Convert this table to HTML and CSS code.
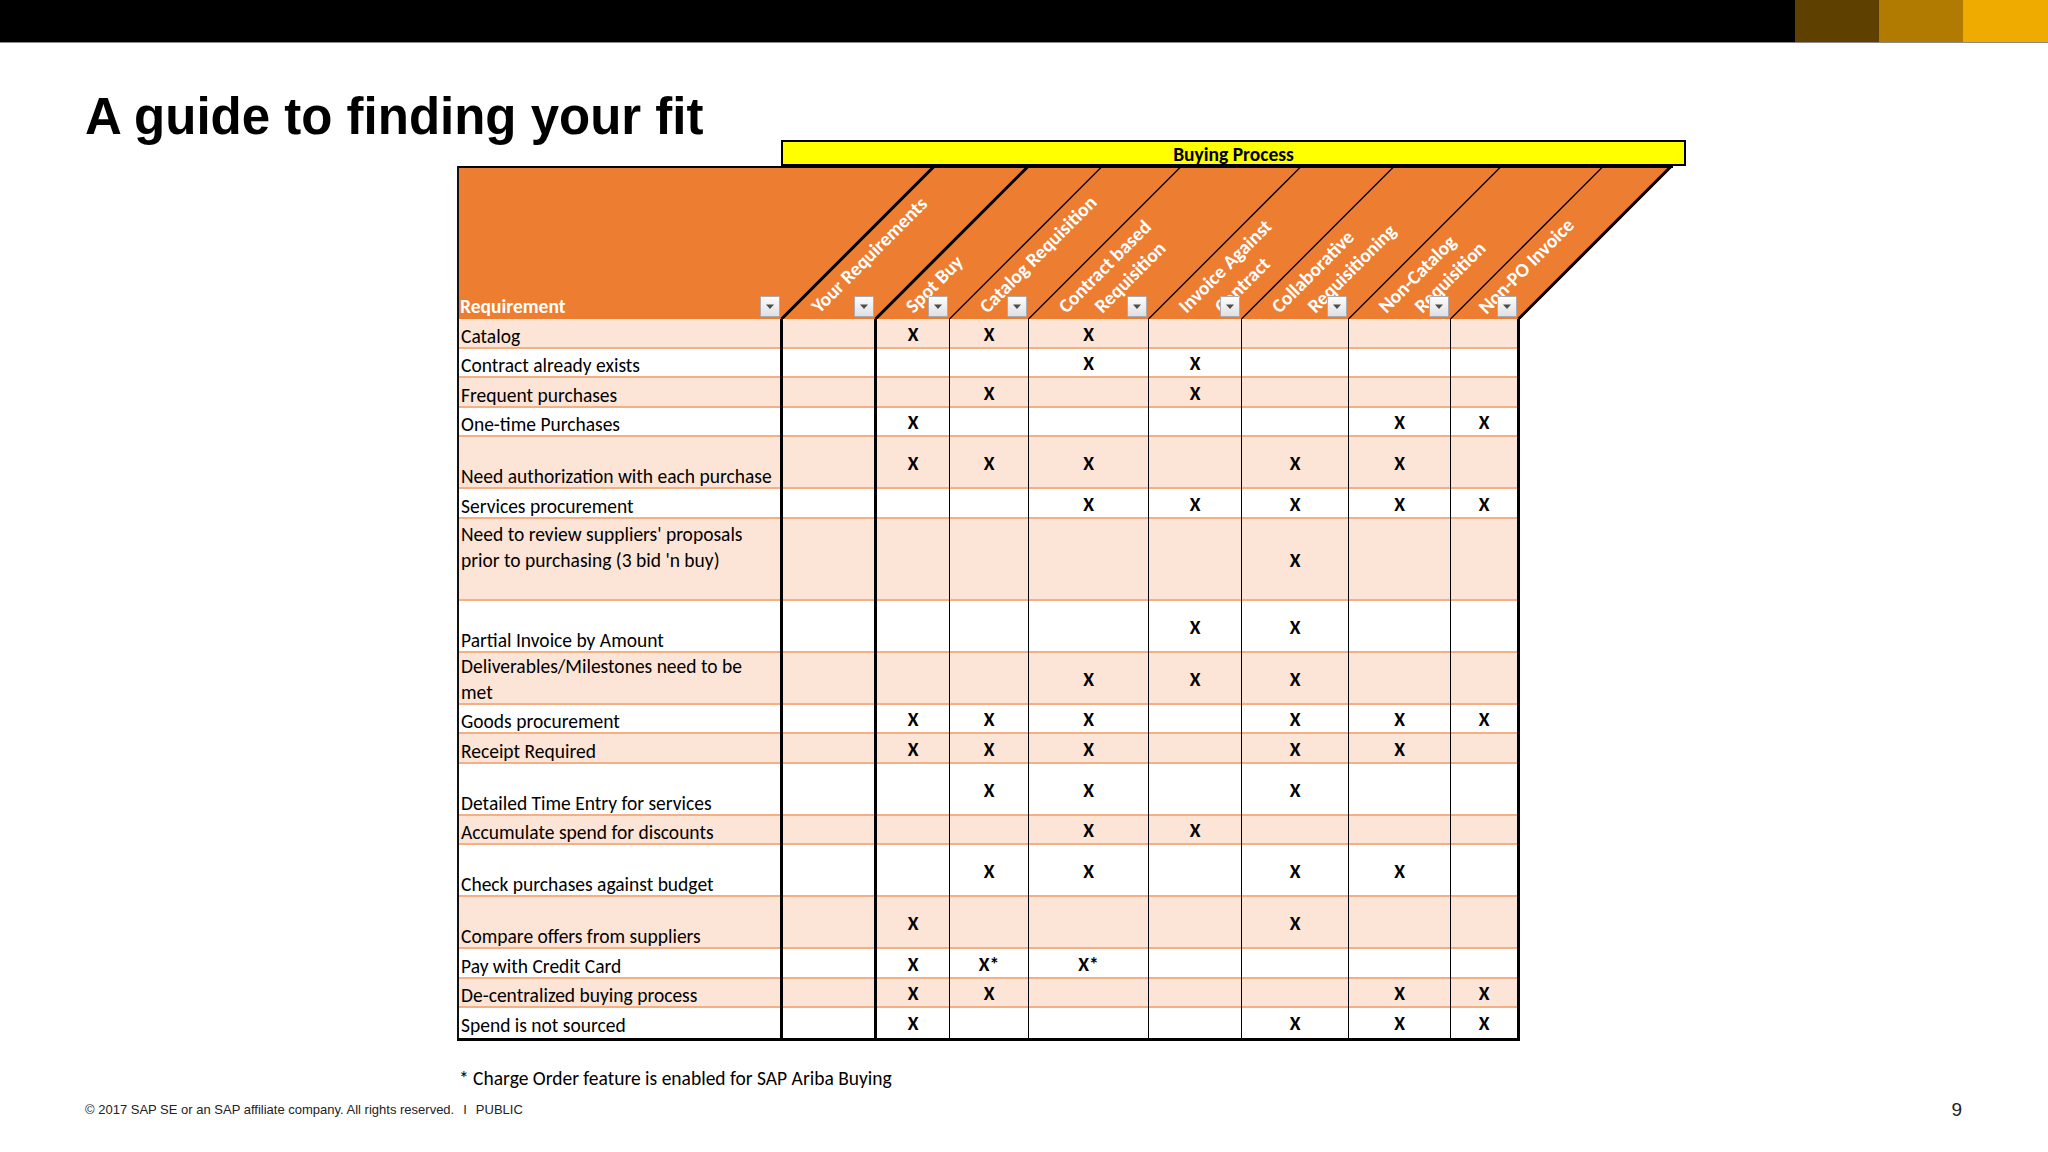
FILE: index.html
```html
<!DOCTYPE html>
<html lang="en">
<head>
<meta charset="utf-8">
<title>A guide to finding your fit</title>
<link rel="stylesheet" href="styles.css">
</head>
<body>
<div class="slide">
  <header class="topbar">
    <div class="blocks"><span class="blk b1"></span><span class="blk b2"></span><span class="blk b3"></span></div>
  </header>

  <h1 class="title">A guide to finding your fit</h1>

  <section class="sheet">
    <div class="banner">
      <div class="banner-spacer"></div>
      <div class="banner-box">Buying Process</div>
    </div>

    <svg class="head" width="1216" height="153" viewBox="0 0 1216 153">
      <defs>
        <linearGradient id="btnfill" x1="0" y1="0" x2="0" y2="1">
          <stop offset="0" stop-color="#fdfdfd"/>
          <stop offset="1" stop-color="#dfe0e3"/>
        </linearGradient>
      </defs>
      <polygon class="band" points="0,0 1216,0 1063,153 0,153"/>
      <line class="thick" x1="0" y1="0.5" x2="1216" y2="0.5"/>
      <line class="edge" x1="1" y1="0" x2="1" y2="153"/>
      <line class="thick" x1="324.5" y1="153" x2="477.5" y2="0"/>
      <line class="thick" x1="418.5" y1="153" x2="571.5" y2="0"/>
      <line class="thin" x1="492.5" y1="153" x2="645.5" y2="0"/>
      <line class="thin" x1="571.5" y1="153" x2="724.5" y2="0"/>
      <line class="thin" x1="691.5" y1="153" x2="844.5" y2="0"/>
      <line class="thin" x1="784.5" y1="153" x2="937.5" y2="0"/>
      <line class="thin" x1="891.5" y1="153" x2="1044.5" y2="0"/>
      <line class="thin" x1="993.5" y1="153" x2="1146.5" y2="0"/>
      <line class="thick" x1="1061.5" y1="153" x2="1214.5" y2="0"/>

      <text class="hl" x="3" y="147">Requirement</text>
      <text class="hl" x="362.5" y="148" transform="rotate(-45 362.5 148)">Your Requirements</text>
      <text class="hl" x="456.5" y="148" transform="rotate(-45 456.5 148)">Spot Buy</text>
      <text class="hl" x="530.5" y="148" transform="rotate(-45 530.5 148)">Catalog Requisition</text>
      <text class="hl" x="609.5" y="148" transform="rotate(-45 609.5 148)">Contract based</text>
      <text class="hl" x="645.5" y="148" transform="rotate(-45 645.5 148)">Requisition</text>
      <text class="hl" x="729.5" y="148" transform="rotate(-45 729.5 148)">Invoice Against</text>
      <text class="hl" x="765.5" y="148" transform="rotate(-45 765.5 148)">Contract</text>
      <text class="hl" x="822.5" y="148" transform="rotate(-45 822.5 148)">Collaborative</text>
      <text class="hl" x="858.5" y="148" transform="rotate(-45 858.5 148)">Requisitioning</text>
      <text class="hl" x="929.5" y="148" transform="rotate(-45 929.5 148)">Non-Catalog</text>
      <text class="hl" x="965.5" y="148" transform="rotate(-45 965.5 148)">Requisition</text>
      <text class="hl" x="1029.5" y="149" transform="rotate(-45 1029.5 149)">Non-PO Invoice</text>

      <g class="btn" transform="translate(303 130)"><rect x="0.5" y="0.5" width="19" height="20" rx="1"/><path d="M6 8.5h8l-4 4.5z"/></g>
      <g class="btn" transform="translate(397 130)"><rect x="0.5" y="0.5" width="19" height="20" rx="1"/><path d="M6 8.5h8l-4 4.5z"/></g>
      <g class="btn" transform="translate(471 130)"><rect x="0.5" y="0.5" width="19" height="20" rx="1"/><path d="M6 8.5h8l-4 4.5z"/></g>
      <g class="btn" transform="translate(550 130)"><rect x="0.5" y="0.5" width="19" height="20" rx="1"/><path d="M6 8.5h8l-4 4.5z"/></g>
      <g class="btn" transform="translate(670 130)"><rect x="0.5" y="0.5" width="19" height="20" rx="1"/><path d="M6 8.5h8l-4 4.5z"/></g>
      <g class="btn" transform="translate(763 130)"><rect x="0.5" y="0.5" width="19" height="20" rx="1"/><path d="M6 8.5h8l-4 4.5z"/></g>
      <g class="btn" transform="translate(870 130)"><rect x="0.5" y="0.5" width="19" height="20" rx="1"/><path d="M6 8.5h8l-4 4.5z"/></g>
      <g class="btn" transform="translate(972 130)"><rect x="0.5" y="0.5" width="19" height="20" rx="1"/><path d="M6 8.5h8l-4 4.5z"/></g>
      <g class="btn" transform="translate(1040 130)"><rect x="0.5" y="0.5" width="19" height="20" rx="1"/><path d="M6 8.5h8l-4 4.5z"/></g>
    </svg>

    <div class="grid">
      <div class="row s pk"><div class="lab">Catalog</div><div></div><div>X</div><div>X</div><div>X</div><div></div><div></div><div></div><div></div></div>
      <div class="row s wh"><div class="lab">Contract already exists</div><div></div><div></div><div></div><div>X</div><div>X</div><div></div><div></div><div></div></div>
      <div class="row s pk"><div class="lab">Frequent purchases</div><div></div><div></div><div>X</div><div></div><div>X</div><div></div><div></div><div></div></div>
      <div class="row s wh"><div class="lab">One-time Purchases</div><div></div><div>X</div><div></div><div></div><div></div><div></div><div>X</div><div>X</div></div>
      <div class="row d pk"><div class="lab">Need authorization with each purchase</div><div></div><div>X</div><div>X</div><div>X</div><div></div><div>X</div><div>X</div><div></div></div>
      <div class="row s wh"><div class="lab">Services procurement</div><div></div><div></div><div></div><div>X</div><div>X</div><div>X</div><div>X</div><div>X</div></div>
      <div class="row t pk"><div class="lab wrap top">Need to review suppliers' proposals<br>prior to purchasing (3 bid 'n buy)</div><div></div><div></div><div></div><div></div><div></div><div>X</div><div></div><div></div></div>
      <div class="row d wh"><div class="lab">Partial Invoice by Amount</div><div></div><div></div><div></div><div></div><div>X</div><div>X</div><div></div><div></div></div>
      <div class="row d pk"><div class="lab wrap">Deliverables/Milestones need to be<br>met</div><div></div><div></div><div></div><div>X</div><div>X</div><div>X</div><div></div><div></div></div>
      <div class="row s wh"><div class="lab">Goods procurement</div><div></div><div>X</div><div>X</div><div>X</div><div></div><div>X</div><div>X</div><div>X</div></div>
      <div class="row s pk"><div class="lab">Receipt Required</div><div></div><div>X</div><div>X</div><div>X</div><div></div><div>X</div><div>X</div><div></div></div>
      <div class="row d wh"><div class="lab">Detailed Time Entry for services</div><div></div><div></div><div>X</div><div>X</div><div></div><div>X</div><div></div><div></div></div>
      <div class="row s pk"><div class="lab">Accumulate spend for discounts</div><div></div><div></div><div></div><div>X</div><div>X</div><div></div><div></div><div></div></div>
      <div class="row d wh"><div class="lab">Check purchases against budget</div><div></div><div></div><div>X</div><div>X</div><div></div><div>X</div><div>X</div><div></div></div>
      <div class="row d pk"><div class="lab">Compare offers from suppliers</div><div></div><div>X</div><div></div><div></div><div></div><div>X</div><div></div><div></div></div>
      <div class="row s wh"><div class="lab">Pay with Credit Card</div><div></div><div>X</div><div>X*</div><div>X*</div><div></div><div></div><div></div><div></div></div>
      <div class="row s pk"><div class="lab">De-centralized buying process</div><div></div><div>X</div><div>X</div><div></div><div></div><div></div><div>X</div><div>X</div></div>
      <div class="row s wh last"><div class="lab">Spend is not sourced</div><div></div><div>X</div><div></div><div></div><div></div><div>X</div><div>X</div><div>X</div></div>
    </div>

    <p class="note">* Charge Order feature is enabled for SAP Ariba Buying</p>
  </section>

  <footer class="footer">
    <div class="copy">© 2017 SAP SE or an SAP affiliate company. All rights reserved.<span class="sep">I</span>PUBLIC</div>
    <div class="pageno">9</div>
  </footer>
</div>
</body>
</html>
```

FILE: styles.css
```css
* { box-sizing: border-box; }

html, body {
  margin: 0;
  padding: 0;
  background: #ffffff;
}

.slide {
  width: 2048px;
  height: 1152px;
  overflow: hidden;
  background: #ffffff;
  font-family: "Carlito", "Lato", "Liberation Sans", sans-serif;
  color: #000;
}

/* top black bar with the three colour blocks */
.topbar {
  height: 43px;
  background: #000;
  border-bottom: 1px solid #8a8a8a;
  display: flex;
  justify-content: flex-end;
}
.blocks { display: flex; height: 42px; }
.blk { display: block; width: 84px; height: 42px; }
.b1 { background: #5e4000; }
.b2 { background: #b07b00; }
.b3 { background: #f0ab00; width: 85px; }

.title {
  margin: 50px 0 0 85px;
  height: 47px;
  font-family: "Liberation Sans", Arial, sans-serif;
  font-weight: 700;
  font-size: 51px;
  line-height: 47px;
  white-space: nowrap;
}

.sheet {
  margin-left: 457px;
  width: 1240px;
}

.banner {
  display: flex;
  height: 26px;
}
.banner-spacer { width: 324px; }
.banner-box {
  width: 905px;
  height: 26px;
  background: #ffff00;
  border: 2px solid #000;
  font-weight: 700;
  font-size: 19.5px;
  line-height: 24px;
  text-align: center;
}

.head { display: block; }
.head .band { fill: #ed7d31; }
.head .thick { stroke: #000; stroke-width: 3; }
.head .thin { stroke: #000; stroke-width: 1.3; }
.head .edge { stroke: #111; stroke-width: 2; }
.head .hl {
  font-family: "Carlito", "Lato", sans-serif;
  font-weight: 700;
  font-size: 19.5px;
  fill: #ffffff;
}
.head .btn rect { fill: url(#btnfill); stroke: #a9abb0; stroke-width: 1; }
.head .btn path { fill: #4d4d4d; }

/* body of the matrix */
.grid {
  width: 1063px;
  border-left: 2px solid #111;
  border-right: 3px solid #000;
  border-bottom: 3px solid #000;
}
.row {
  display: grid;
  grid-template-columns: 324px 94px 73px 79px 120px 93px 107px 102px 66px;
  box-shadow: inset 0 -2px 0 #f4b084;
}
.row.last { box-shadow: none; }
.row.s { height: 29.5px; }
.row.d { height: 52px; }
.row.t { height: 82px; }
.row.pk { background: #fce4d6; }
.row.wh { background: #ffffff; }

.row > div {
  display: flex;
  align-items: center;
  justify-content: center;
  font-weight: 700;
  font-size: 19.5px;
  border-right: 1px solid #000;
}
.row > div:nth-child(1),
.row > div:nth-child(2) { border-right-width: 3px; }
.row > div:nth-child(9) { border-right: none; }

.row > .lab {
  height: 100%;
  display: flex;
  flex-direction: column;
  justify-content: flex-end;
  align-items: flex-start;
  padding: 0 0 2px 2px;
  font-weight: 400;
  font-size: 19.5px;
  line-height: 22px;
  white-space: nowrap;
}
.row > .lab.wrap { line-height: 26px; padding-bottom: 0; }
.row > .lab.top { justify-content: flex-start; padding-top: 2px; }

.note {
  margin: 26px 0 0 2px;
  font-size: 19.5px;
  line-height: 22px;
}

.footer {
  display: flex;
  justify-content: space-between;
  align-items: center;
  margin-top: 9px;
  padding: 0 86px 0 85px;
  font-family: "Liberation Sans", Arial, sans-serif;
}
.copy { font-size: 13px; color: #222; }
.sep { margin: 0 9px; }
.pageno { font-size: 19px; line-height: 24px; color: #222; }
```
